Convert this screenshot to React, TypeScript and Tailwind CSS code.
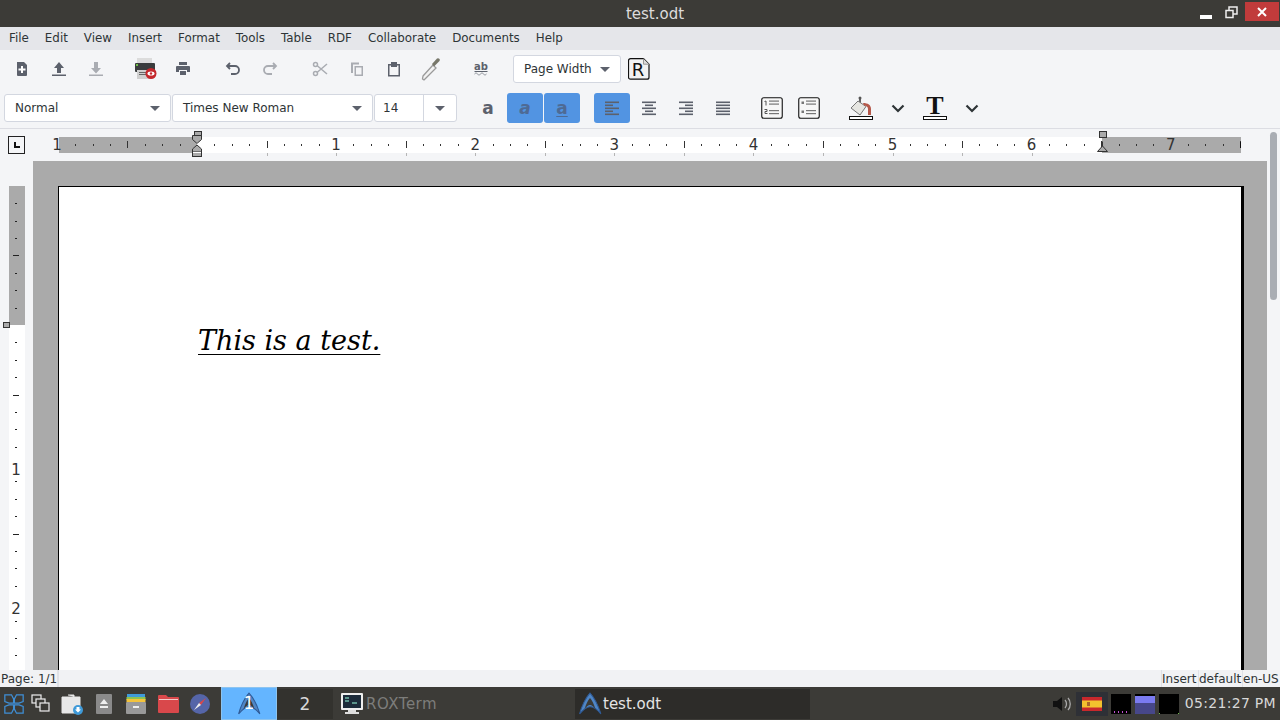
import type { ReactNode } from "react";

const ink = "#5c616c";
const dim = "#a9acb2";
const inch = 139.1;
const menus = ["File", "Edit", "View", "Insert", "Format", "Tools", "Table", "RDF", "Collaborate", "Documents", "Help"];

const Ico = ({ children }: { children: ReactNode }) => (
  <svg width="16" height="16" viewBox="0 0 16 16">
    {children}
  </svg>
);

const Tool = ({ children, className = "" }: { children: ReactNode; className?: string }) => (
  <div className={`flex h-[36px] w-[37px] shrink-0 items-center justify-center pr-[1px] ${className}`}>{children}</div>
);

const Active = ({ children, className = "" }: { children: ReactNode; className?: string }) => (
  <div className={`flex h-[30px] w-[36px] shrink-0 items-center justify-center rounded-[3px] bg-[#5294e2] ${className}`}>{children}</div>
);

const Caret = () => (
  <svg width="10" height="5" viewBox="0 0 10 5">
    <path d="M0 0h10L5 5z" fill={ink} />
  </svg>
);

const Chevron = () => (
  <svg width="14" height="9" viewBox="0 0 14 9">
    <path d="M1.5 1.5 7 7l5.5-5.5" fill="none" stroke="#2e3436" strokeWidth="2.2" />
  </svg>
);

const Combo = ({ label, className }: { label: string; className: string }) => (
  <div className={`flex h-[28px] shrink-0 items-center justify-between rounded-[3px] border border-[#d3d7e0] bg-white px-[10px] text-[12px] text-[#2e3436] ${className}`}>
    <span>{label}</span>
    <Caret />
  </div>
);

const AlignIcon = ({ kind }: { kind: "left" | "center" | "right" | "fill" }) => (
  <Ico>
    {[14, 8, 14, 8, 14].map((w, i) => {
      const width = kind === "fill" ? 14 : w;
      const x = kind === "left" || kind === "fill" ? 1 : kind === "right" ? 15 - width : 8 - width / 2;
      return <rect key={i} x={x} y={1.5 + i * 3} width={width} height="1.6" fill={ink} />;
    })}
  </Ico>
);

const ListIcon = ({ numbered }: { numbered: boolean }) => (
  <svg width="22" height="22" viewBox="0 0 22 22">
    <rect x="0.75" y="0.75" width="20.5" height="20.5" rx="2" fill="#f7f7f7" stroke="#111" strokeWidth="1.1" />
    {numbered ? (
      <>
        <path d="M3.5 4.5 5 4v4.500" fill="none" stroke="#555" strokeWidth="1" />
        <path d="M3.500 12.500h2.500v2H4v2h2.500" fill="none" stroke="#555" strokeWidth="1" />
      </>
    ) : (
      <>
        <rect x="3.500" y="4.500" width="2.500" height="2.500" fill="#777" />
        <rect x="3.500" y="13.500" width="2.500" height="2.500" fill="#777" />
      </>
    )}
    {[3.500, 6.500, 13, 16].map((y) => (
      <rect key={y} x="8" y={y} width="10" height="1.200" fill="#777" />
    ))}
  </svg>
);

const HRuler = () => {
  const ticks = [];
  for (let i = -8; i <= 64; i++) {
    const x = 197 + (i * inch) / 8;
    if (x < 60 || x > 1241 || i % 8 === 0) continue;
    const half = i % 4 === 0;
    ticks.push(<rect key={i} x={Math.round(x)} y={half ? 12 : 15} width="1" height={half ? 7 : 2} fill="#333" />);
  }
  const guides = [];
  for (let i = 1; i <= 12; i++) {
    guides.push(<rect key={i} x={Math.round(197 + (i * inch) / 2)} y="24" width="1" height="3" fill="#b5b5b5" />);
  }
  return (
    <svg width="1267" height="32" viewBox="0 0 1267 32" className="block shrink-0">
      <rect x="8.500" y="7.500" width="16" height="17" fill="#f4f5f7" stroke="#222" />
      <path d="M15 13v5h5" fill="none" stroke="#111" strokeWidth="2" />
      <rect x="59" y="8" width="1182" height="16" fill="#aaaaaa" />
      <rect x="197" y="8" width="905" height="16" fill="#ffffff" />
      {ticks}
      {guides}
      <rect x="1240" y="13" width="1" height="6" fill="#111" />
      {[-1, 1, 2, 3, 4, 5, 6, 7].map((n) => (
        <text key={n} x={197 + n * inch - (n === -1 ? 1 : 0)} y="21" textAnchor="middle" fontSize="15" fill="#333" fontFamily="'DejaVu Sans', sans-serif">
          {Math.abs(n)}
        </text>
      ))}
      <rect x="194.500" y="2.500" width="7" height="4" fill="#aaa" stroke="#333" />
      <path d="M192.500 6.500h9v4l-4 3.500h-1l-4-3.500z" fill="#aaa" stroke="#333" />
      <path d="M197 16l4.500 4v3h-9v-3z" fill="#aaa" stroke="#333" />
      <rect x="192.500" y="23.500" width="9" height="4" fill="#aaa" stroke="#333" />
      <rect x="193" y="23" width="8" height="1" fill="#fff" />
      <rect x="1099.500" y="2.500" width="7" height="6" fill="#aaa" stroke="#333" />
      <path d="M1102.500 12.500v4.500l-5 5.500h10l-5-5.500" fill="#aaa" stroke="#333" />
    </svg>
  );
};

const VRuler = () => {
  const ticks = [];
  for (let i = -7; i <= 19; i++) {
    if (i % 8 === 0) continue;
    const y = 164 + (i * inch) / 8;
    const half = i % 4 === 0;
    ticks.push(<rect key={i} x={half ? 13 : 15} y={Math.round(y)} width={half ? 6 : 2} height="1" fill="#222" />);
  }
  return (
    <svg width="33" height="509" viewBox="0 0 33 509" className="block shrink-0">
      <rect x="9" y="25" width="16" height="139" fill="#aaaaaa" />
      <rect x="9" y="164" width="16" height="345" fill="#ffffff" />
      {ticks}
      <rect x="3.500" y="161.500" width="6" height="5" fill="#aaa" stroke="#333" />
      <text x="16" y="314" textAnchor="middle" fontSize="15" fill="#333" fontFamily="'DejaVu Sans', sans-serif">1</text>
      <text x="16" y="453" textAnchor="middle" fontSize="15" fill="#333" fontFamily="'DejaVu Sans', sans-serif">2</text>
    </svg>
  );
};

const ArchLogo = ({ size = 22 }: { size?: number }) => (
  <svg width={size} height={size} viewBox="0 0 22 22">
    <path d="M1.500 20C3 14 7 5 11 1 15 5 19 14 21 20 17 15 14 13.500 11 13.500 8 13.500 5 16 1.500 20z" fill="#4f86c6" stroke="#2f5a95" strokeWidth="1" />
    <path d="M6 15.500C7.500 11 9 7.500 11 5.500c2 2 3.500 5.500 5 10-2-2-3.500-3.500-5-3.500S8 13.500 6 15.500z" fill="#3c3b37" />
  </svg>
);

export default function App() {
  return (
    <div className="flex h-[720px] w-[1280px] flex-col overflow-hidden bg-[#f4f5f7] font-['DejaVu_Sans',sans-serif]">
      {/* title bar */}
      <div className="relative flex h-[27px] shrink-0 items-center justify-center bg-[#3c3b37] pl-[30px] pt-[1px] text-[15px] text-[#dcdcdc]">
        test.odt
        <div className="absolute right-[1px] top-[2px] flex items-start">
          <div className="mr-[13px] mt-[13px] h-[4px] w-[12px] bg-white" />
          <svg width="13" height="13" viewBox="0 0 13 13" className="mr-[7px] mt-[4px]">
            <rect x="4" y="1" width="8" height="7" fill="none" stroke="#eee" strokeWidth="1.500" />
            <rect x="1" y="4.500" width="7" height="7" fill="#3c3b37" stroke="#eee" strokeWidth="1.500" />
          </svg>
          <div className="flex h-[19px] w-[34px] items-center justify-center bg-[#c13b3b]">
            <svg width="10" height="10" viewBox="0 0 10 10">
              <path d="M1 1l8 8M9 1l-8 8" stroke="#fff" strokeWidth="2" />
            </svg>
          </div>
        </div>
      </div>

      {/* menu bar */}
      <div className="flex h-[23px] shrink-0 items-center gap-4 bg-[#e5e6ea] pl-[9px] pt-[1px] text-[11.87px] text-[#2e3436]">
        {menus.map((m) => (
          <span key={m}>{m}</span>
        ))}
      </div>

      {/* main toolbar */}
      <div className="flex h-[38px] shrink-0 items-center pl-[4px]">
        <Tool>
          <Ico>
            <path d="M3 1h7l3 3v10a1 1 0 0 1-1 1H4a1 1 0 0 1-1-1z" fill={ink} />
            <path d="M7 5h2v2.500h2.500v2H9V12H7V9.500H4.500v-2H7z" fill="#fff" />
          </Ico>
        </Tool>
        <Tool>
          <Ico>
            <path d="M8 1l5 6H10v5H6V7H3z" fill={ink} />
            <rect x="1" y="13.500" width="14" height="1.500" fill={ink} />
          </Ico>
        </Tool>
        <Tool>
          <Ico>
            <path d="M6 1h4v6h3l-5 5.500L3 7h3z" fill={dim} />
            <rect x="1" y="13.500" width="14" height="1.500" fill={dim} />
          </Ico>
        </Tool>
        <Tool className="ml-[13px]">
          <svg width="22" height="22" viewBox="0 0 22 22">
            <rect x="2" y="0" width="15" height="5" fill="#dcdcdc" />
            <rect x="0" y="5" width="20" height="9" rx="1" fill="#3a3c3e" />
            <rect x="1" y="6" width="2" height="2" fill="#6fbf4a" />
            <rect x="2" y="12" width="15" height="9" fill="#cfcfcf" />
            <rect x="4" y="14" width="7" height="1" fill="#666" />
            <rect x="4" y="16" width="7" height="1" fill="#666" />
            <circle cx="16" cy="15.500" r="5.500" fill="#c4282d" />
            <ellipse cx="16" cy="15.500" rx="3.500" ry="2" fill="#fff" />
            <circle cx="16" cy="15.500" r="1.200" fill="#c4282d" />
          </svg>
        </Tool>
        <Tool>
          <Ico>
            <rect x="4" y="1" width="8" height="3" fill={ink} />
            <path d="M1 6a1 1 0 0 1 1-1h12a1 1 0 0 1 1 1v5h-3V9H4v2H1z" fill={ink} />
            <rect x="5" y="10" width="6" height="4" fill={ink} />
          </Ico>
        </Tool>
        <Tool className="ml-[13px]">
          <Ico>
            <path d="M5 2 2 5l3 3" fill="none" stroke={ink} strokeWidth="1.800" />
            <path d="M3 5h7a3.800 3.800 0 0 1 0 8H6" fill="none" stroke={ink} strokeWidth="1.800" />
          </Ico>
        </Tool>
        <Tool>
          <Ico>
            <path d="M11 2l3 3-3 3" fill="none" stroke={dim} strokeWidth="1.800" />
            <path d="M13 5H6a3.800 3.800 0 0 0 0 8h4" fill="none" stroke={dim} strokeWidth="1.800" />
          </Ico>
        </Tool>
        <Tool className="ml-[13px]">
          <Ico>
            <circle cx="3.500" cy="3.500" r="2" fill="none" stroke={dim} strokeWidth="1.500" />
            <circle cx="3.500" cy="12.500" r="2" fill="none" stroke={dim} strokeWidth="1.500" />
            <path d="M5 4.500 15 13M5 11.500 15 3" stroke={dim} strokeWidth="1.500" />
          </Ico>
        </Tool>
        <Tool>
          <Ico>
            <path d="M2 1.500h8v2H4V12H2z" fill={dim} />
            <path d="M5.500 5h8.500v10H5.500zM7 6.500V13.500h5.500V6.500z" fill={dim} fillRule="evenodd" />
          </Ico>
        </Tool>
        <Tool>
          <Ico>
            <path d="M2 3h3V1h6v2h3v12.500H2zM3.500 4.500v9.500h9V4.500H11V6H5V4.500z" fill={ink} fillRule="evenodd" />
          </Ico>
        </Tool>
        <Tool>
          <svg width="20" height="24" viewBox="0 0 20 24">
            <path d="M2 19l10-11 3 3L5 21l-2 2-1.500-1z" fill="#f2f2f2" stroke="#9a9a9a" strokeWidth="1.300" />
            <path d="M11 7l5-5.500a1.800 1.800 0 0 1 2.500 2.500L13 9.500z" fill="#77776a" />
          </svg>
        </Tool>
        <Tool className="ml-[13px]">
          <svg width="16" height="16" viewBox="0 0 16 16">
            <text x="8" y="9" textAnchor="middle" fontSize="10" fontWeight="700" fill={ink} fontFamily="'DejaVu Sans', sans-serif">ab</text>
            <path d="M1.500 10.500h13" stroke={ink} strokeWidth="1" />
            <path d="M1.500 13c1.300-1.300 1.700-1.300 3 0s1.700 1.300 3 0 1.700-1.300 3 0 1.700 1.300 3 0" fill="none" stroke="#8a8e96" strokeWidth="1" />
          </svg>
        </Tool>
        <Combo label="Page Width" className="ml-[13px] w-[108px]" />
        <Tool>
          <svg width="22" height="22" viewBox="0 0 22 22">
            <path d="M2.500 0.700h13l5.500 5.500v13a2 2 0 0 1-2 2H2.500a2 2 0 0 1-2-2v-16.500a2 2 0 0 1 2-2z" fill="#f2f2f2" stroke="#111" strokeWidth="1.200" />
            <path d="M15.500 0.700v5.500h5.500" fill="#ddd" stroke="#999" />
            <text x="10" y="18" textAnchor="middle" fontSize="18" fill="#111" fontFamily="'DejaVu Sans', sans-serif">R</text>
          </svg>
        </Tool>
      </div>

      {/* format toolbar */}
      <div className="flex h-[41px] shrink-0 items-center border-b border-[#dcdde3] pl-[4px]">
        <Combo label="Normal" className="w-[167px]" />
        <Combo label="Times New Roman" className="ml-[1px] w-[201px]" />
        <div className="ml-[1px] flex h-[28px] w-[83px] shrink-0 items-center rounded-[3px] border border-[#d3d7e0] bg-white text-[12px] text-[#2e3436]">
          <span className="w-[48px] pl-[8px]">14</span>
          <div className="flex h-full flex-1 items-center justify-center border-l border-[#d3d7e0]">
            <Caret />
          </div>
        </div>
        <Tool className="ml-[13px]">
          <span className="text-[17px] font-bold leading-none text-[#5c616c]">a</span>
        </Tool>
        <Active>
          <span className="text-[17px] font-bold italic leading-none text-[#4e6a94]">a</span>
        </Active>
        <Active className="ml-[1px]">
          <span className="text-[17px] font-bold leading-none text-[#4e6a94] underline underline-offset-2">a</span>
        </Active>
        <Active className="ml-[14px]">
          <AlignIcon kind="left" />
        </Active>
        <Tool className="ml-[1px]">
          <AlignIcon kind="center" />
        </Tool>
        <Tool>
          <AlignIcon kind="right" />
        </Tool>
        <Tool>
          <AlignIcon kind="fill" />
        </Tool>
        <Tool className="ml-[12px]">
          <ListIcon numbered />
        </Tool>
        <Tool>
          <ListIcon numbered={false} />
        </Tool>
        <Tool className="ml-[15px]">
          <svg width="24" height="24" viewBox="0 0 24 24">
            <path d="M11 1.500V9" stroke="#333" strokeWidth="1.500" fill="none" />
            <circle cx="11" cy="2" r="1.500" fill="#555" />
            <path d="M2 12l7-7 8 5.500-6 8.500z" fill="#e6e6e2" stroke="#777" />
            <path d="M14 7c5 0 8 2 8 6v6h-3v-6c0-2-2-3.500-4-3.500z" fill="#b5584a" />
            <rect x="0.500" y="20.500" width="23" height="3" fill="#fff" stroke="#111" />
          </svg>
        </Tool>
        <Tool>
          <Chevron />
        </Tool>
        <Tool>
          <div className="flex w-[24px] flex-col items-center">
            <span className="font-['Liberation_Serif',serif] text-[26px] font-bold leading-[20px] text-[#111]">T</span>
            <div className="h-[4px] w-[24px] border border-[#111] bg-white" />
          </div>
        </Tool>
        <Tool>
          <Chevron />
        </Tool>
      </div>

      {/* document */}
      <div className="flex min-h-0 flex-1">
        <div className="flex min-w-0 flex-1 flex-col">
          <HRuler />
          <div className="flex min-h-0 flex-1">
            <VRuler />
            <div className="min-w-0 flex-1 overflow-hidden bg-[#aaaaaa] pl-[25px] pt-[25px]">
              <div className="h-[600px] w-[1186px] border-l border-r-[3px] border-t border-black bg-white pl-[139px] pt-[136px] font-['DejaVu_Serif',serif] text-[27px] italic leading-[36px] text-black underline decoration-1 underline-offset-4">
                This is a test.
              </div>
            </div>
          </div>
        </div>
        <div className="w-[13px] shrink-0 px-[3px] pt-[3px]">
          <div className="h-[168px] w-[7px] rounded-full bg-[#a9adb3]" />
        </div>
      </div>

      {/* status bar */}
      <div className="flex h-[17px] shrink-0 items-center whitespace-nowrap bg-[#f1f2f4] pr-[2px] text-[12px] leading-none text-[#2e3436]">
        <span className="flex h-full w-[59px] items-center border-r-2 border-[#dfe1e6] pl-[1px]">Page: 1/1</span>
        <div className="flex-1" />
        <span className="flex h-full w-[37px] items-center border-l border-[#dfe1e6]">Insert</span>
        <span className="flex h-full w-[44px] items-center border-l border-[#dfe1e6]">default</span>
        <span className="flex h-full w-[36px] items-center border-l border-[#dfe1e6]">en-US</span>
      </div>

      {/* panel */}
      <div className="flex h-[33px] shrink-0 items-center bg-[#3c3b37] text-[#d8d8d8]">
        <div className="flex h-full w-[221px] shrink-0 items-center">
          <svg width="20" height="20" viewBox="0 0 24 24" className="ml-[4px]">
            <path d="M1 1h8l2.500 5v5H6L1 9zM23 1h-8l-2.500 5v5H18l5-2zM1 23h8l2.500-5v-5H6l-5 2zM23 23h-8l-2.500-5v-5H18l5 2z" fill="none" stroke="#3f8fd6" strokeWidth="1.500" />
          </svg>
          <svg width="19" height="19" viewBox="0 0 19 19" className="ml-[7px]">
            <rect x="1" y="1" width="9" height="8" fill="none" stroke="#eee" strokeWidth="1.200" />
            <rect x="5" y="5" width="9" height="8" fill="#3c3b37" stroke="#eee" strokeWidth="1.200" />
            <rect x="9" y="9" width="9" height="8" fill="#3c3b37" stroke="#eee" strokeWidth="1.200" />
          </svg>
          <svg width="22" height="24" viewBox="0 0 22 24" className="ml-[11px]">
            <path d="M7 3h6v2M1 5h18v16H1z" fill="#e8e8e8" stroke="#e8e8e8" />
            <circle cx="17" cy="18" r="5" fill="#3f9ad8" />
            <path d="M15.500 15h3v2.500h1.500L17 20.500 14 17.500h1.500z" fill="#fff" />
          </svg>
          <svg width="16" height="20" viewBox="0 0 16 20" className="ml-[13px]">
            <rect width="16" height="20" rx="1" fill="#8a8a8a" />
            <path d="M8 5l4 5H4zM4 12h8v2H4z" fill="#eee" />
          </svg>
          <svg width="20" height="20" viewBox="0 0 20 20" className="ml-[14px]">
            <rect x="1" y="0" width="18" height="3" fill="#3f9ad8" />
            <rect x="0.500" y="3" width="19" height="3" fill="#8cc152" />
            <rect x="0.500" y="5" width="19" height="3" fill="#f3c33c" />
            <rect x="0" y="8" width="20" height="12" rx="1" fill="#999" />
            <rect x="7" y="12" width="6" height="2" fill="#eee" />
          </svg>
          <svg width="21" height="18" viewBox="0 0 21 18" className="ml-[12px]">
            <path d="M0 1a1 1 0 0 1 1-1h7l2 2h10a1 1 0 0 1 1 1v14a1 1 0 0 1-1 1H1a1 1 0 0 1-1-1z" fill="#d9484b" />
            <rect x="1" y="4" width="19" height="1" fill="#f3c9c9" />
          </svg>
          <svg width="20" height="20" viewBox="0 0 20 20" className="ml-[11px]">
            <circle cx="10" cy="10" r="10" fill="#5565a8" />
            <path d="M16 4 9 9l2 2z" fill="#d9484b" />
            <path d="M4 16l5-7 2 2z" fill="#eee" />
          </svg>
        </div>
        <div className="relative flex h-full w-[56px] shrink-0 items-center justify-center border border-[#8cc4f0] bg-[#64b5ff]">
          <ArchLogo size={24} />
          <span className="absolute text-[17px] text-white">1</span>
        </div>
        <div className="flex h-[30px] w-[56px] shrink-0 items-center justify-center bg-[#33322e] pt-[2px] text-[17px]">2</div>
        <div className="flex h-full w-[242px] shrink-0 items-center pl-[7px] text-[15px] tracking-[0.5px] text-[#7d7d7b]">
          <svg width="24" height="24" viewBox="0 0 24 24">
            <rect x="1" y="1" width="22" height="17" rx="1" fill="#eee" />
            <rect x="3" y="3" width="18" height="13" fill="#1c2b3a" />
            <path d="M5 6h4M5 9h4M12 11h5" stroke="#9fd" strokeWidth="1.200" />
            <path d="M8 18h8v2h3v2H5v-2h3z" fill="#ddd" />
          </svg>
          <span className="ml-[2px] pt-[2px]">ROXTerm</span>
        </div>
        <div className="flex h-[30px] w-[235px] shrink-0 items-center bg-[#2d2c29] pl-[3px] text-[15px] text-[#e4e4e4]">
          <ArchLogo size={24} />
          <span className="ml-[1px] pt-[2px]">test.odt</span>
        </div>
        <div className="flex-1" />
        <svg width="20" height="16" viewBox="0 0 20 16" className="mr-[4px]">
          <path d="M1 5h4l5-4v14l-5-4H1z" fill="#111" />
          <path d="M13 4c2 2 2 6 0 8M16 2c3 3 3 9 0 12" fill="none" stroke="#aaa" strokeWidth="1.300" />
        </svg>
        <div className="flex h-[24px] w-[32px] shrink-0 items-center justify-center bg-[#2e3036]">
          <svg width="20" height="14" viewBox="0 0 20 14">
            <rect width="20" height="14" fill="#c8282c" />
            <rect y="3.500" width="20" height="7" fill="#f2c12e" />
            <rect x="5" y="5" width="3" height="4" fill="#a8662a" />
          </svg>
        </div>
        <div className="ml-[3px] flex h-[20px] w-[20px] shrink-0 items-end justify-center gap-[3px] bg-black">
          {[0, 1, 2, 3].map((i) => (
            <div key={i} className="mb-[1px] h-[2px] w-[1px] bg-[#c050d0]" />
          ))}
        </div>
        <div className="ml-[4px] flex h-[20px] w-[20px] shrink-0 flex-col">
          <div className="h-[2px] bg-black" />
          <div className="h-[7px] bg-[#7b7bf0]" />
          <div className="flex-1 bg-[#474789]" />
        </div>
        <div className="ml-[4px] flex h-[20px] w-[20px] shrink-0 items-end justify-between bg-black">
          <div className="h-[1px] w-[1px] bg-[#6fbf4a]" />
          <div className="h-[1px] w-[1px] bg-[#6fbf4a]" />
        </div>
        <span className="ml-[6px] mr-[4px] text-[14px] tracking-[0.3px] text-[#d8d8d8]">05:21:27 PM</span>
      </div>
    </div>
  );
}
